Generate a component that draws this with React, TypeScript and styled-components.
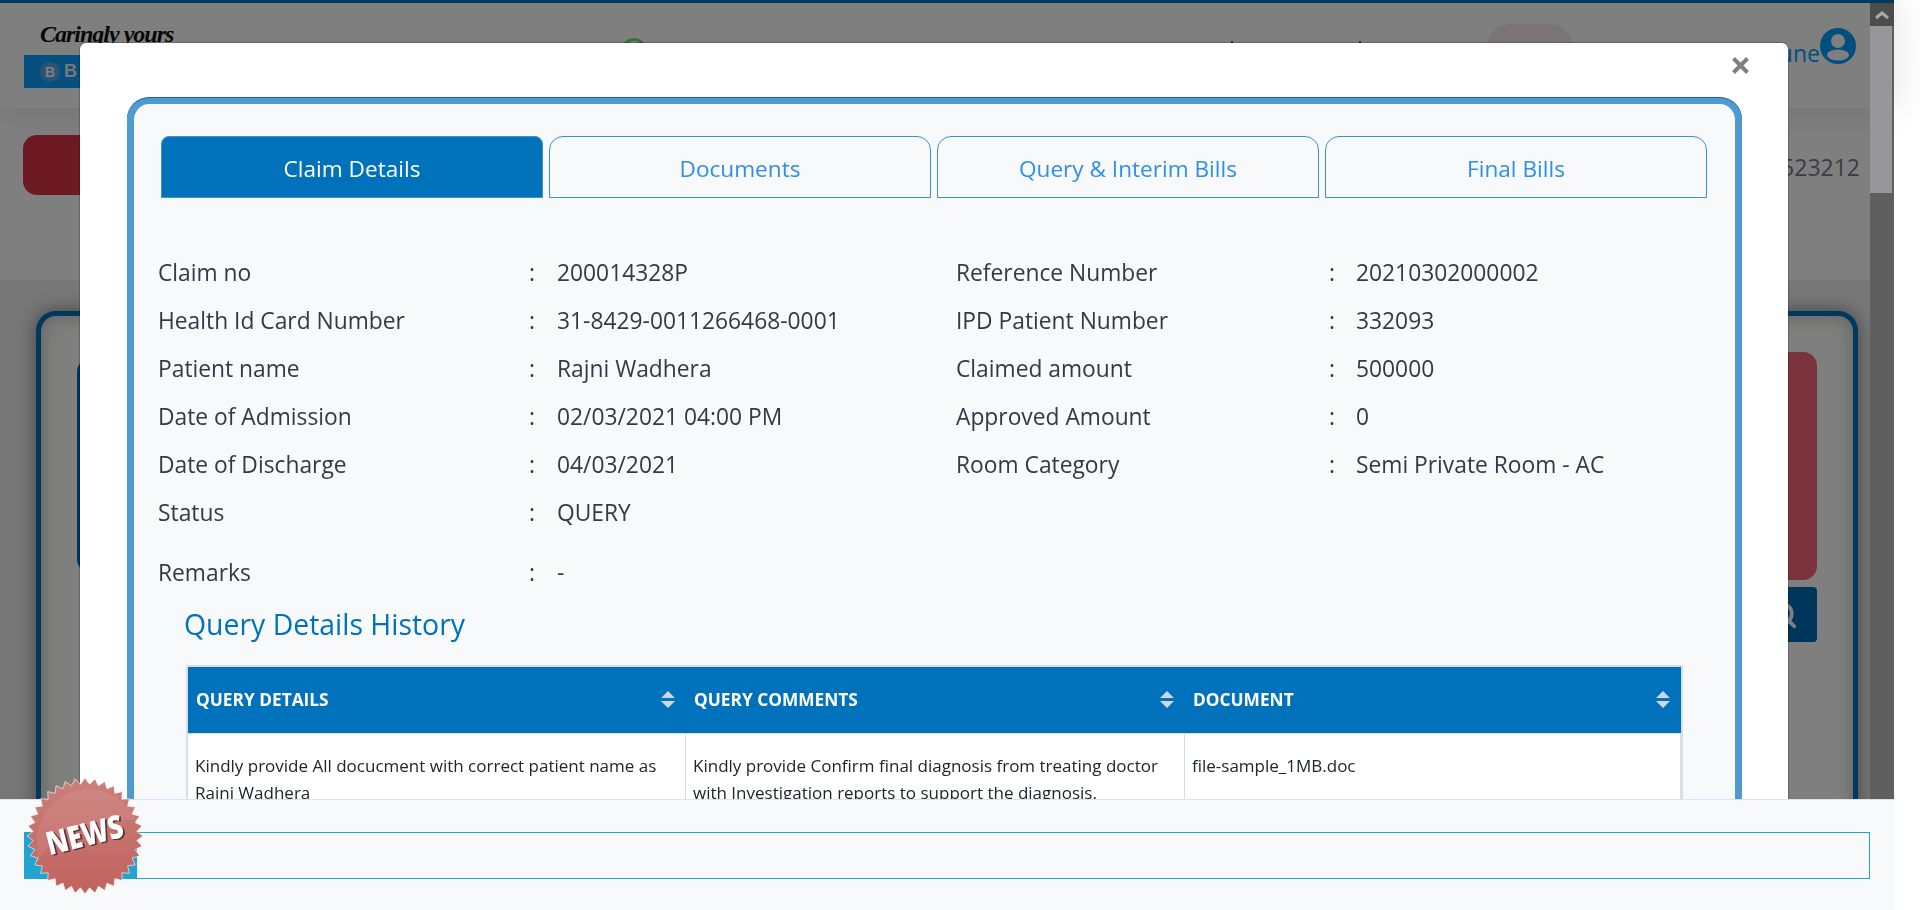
import React from "react";
import styled, { createGlobalStyle } from "styled-components";
import { Search } from "lucide-react";

const GlobalStyle = createGlobalStyle`
  html, body {
    margin: 0;
    padding: 0;
    height: 100%;
    overflow: hidden;
    background: #ffffff;
    font-family: "Open Sans", "Noto Sans", sans-serif;
  }
`;

/* page behind the modal, colours are before the 50% backdrop */
const Page = styled.div`
  width: 1894px;
  height: 910px;
  background: #eeeeee;
`;

const TopHeader = styled.header`
  position: relative;
  z-index: 1;
  box-sizing: border-box;
  height: 108px;
  display: flex;
  padding: 0 38px 0 24px;
  border-top: 3px solid #0072bc;
  background: #fdfefc;
  box-shadow: 0 0 40px rgba(0, 0, 0, 0.12);
`;

const Logo = styled.div`
  width: 180px;
  padding-top: 18px;
`;

const LogoScript = styled.div`
  height: 34px;
  padding-left: 16px;
  font: italic 700 24px "Liberation Serif", serif;
  letter-spacing: -1px;
  color: #111;
  white-space: nowrap;
`;

const LogoStrip = styled.div`
  display: flex;
  align-items: center;
  gap: 4px;
  height: 33px;
  padding-left: 16px;
  background: #0aa0ff;
`;

const LogoMark = styled.span`
  width: 20px;
  height: 20px;
  border-radius: 50%;
  background: #5aa8e8;
  color: #fff;
  font: 700 14px/20px "Liberation Sans", sans-serif;
  text-align: center;
`;

const LogoWord = styled.span`
  color: #eee;
  font: 700 18px "Liberation Sans", sans-serif;
`;

const StatusRing = styled.span`
  box-sizing: border-box;
  width: 26px;
  height: 26px;
  margin: 35px 0 0 417px;
  border: 3px solid #70e070;
  border-radius: 50%;
`;

const Tick = styled.span<{ $gap: number }>`
  width: 2px;
  height: 4px;
  margin: 38px 0 0 ${(p) => p.$gap}px;
  background: #0072bc;
`;

const Pill = styled.span`
  width: 86px;
  height: 48px;
  margin: 21px 0 0 126px;
  border-radius: 24px;
  background: #f4e6f0;
`;

const UserArea = styled.div`
  display: flex;
  align-items: flex-start;
  margin-left: auto;
  height: 36px;
  margin-top: 25px;
  color: #009eff;
  font-size: 23px;
`;

const UserName = styled.span`
  margin-top: 9px;
`;

const TitleBand = styled.div`
  box-sizing: border-box;
  height: 172px;
  display: flex;
  justify-content: space-between;
  padding: 27px 34px 0 23px;
  background: #ffffff;
`;

const BackButton = styled.div`
  width: 100px;
  height: 60px;
  border-radius: 14px;
  background: #dc3444;
`;

const PolicyNo = styled.div`
  margin-top: 16px;
  font-size: 23px;
  color: #74788f;
`;

const Content = styled.main`
  padding: 31px 36px 0;
`;

const SearchCard = styled.div`
  box-sizing: border-box;
  height: 620px;
  display: flex;
  justify-content: space-between;
  padding: 36px;
  background: #fdfefc;
  border: 5px solid #0072bc;
  border-radius: 20px;
  box-shadow: 0 0 18px rgba(0, 0, 0, 0.45), inset 0 0 18px rgba(0, 0, 0, 0.25);
`;

const FilterPanel = styled.div`
  width: 100px;
  height: 215px;
  margin-top: 6px;
  border-radius: 14px;
  background: #006bc0;
`;

const ActionColumn = styled.div`
  display: flex;
  flex-direction: column;
  align-items: flex-end;
  gap: 7px;
`;

const RedPanel = styled.div`
  width: 100px;
  height: 228px;
  border-radius: 14px;
  background: #f46678;
`;

const SearchButton = styled.div`
  width: 68px;
  height: 55px;
  display: flex;
  align-items: center;
  justify-content: center;
  border-radius: 4px;
  background: #006ab8;
  color: #fff;
`;

const Scrollbar = styled.div`
  position: fixed;
  z-index: 3;
  top: 3px;
  left: 1870px;
  width: 24px;
  height: 800px;
  background: #5f5f5f;
`;

const ScrollUp = styled.div`
  height: 23px;
  display: flex;
  align-items: center;
  justify-content: center;
  background: #4b4c4c;
`;

const ScrollThumb = styled.div`
  width: 22px;
  height: 167px;
  background: #97979a;
`;

const Backdrop = styled.div`
  position: fixed;
  z-index: 2;
  top: 0;
  left: 0;
  width: 1894px;
  height: 910px;
  background: rgba(0, 0, 0, 0.5);
`;

const Modal = styled.section`
  position: fixed;
  z-index: 4;
  top: 43px;
  left: 80px;
  width: 1708px;
  height: 900px;
  box-sizing: border-box;
  padding: 55px 46px 0 47px;
  background: #fff;
  border-radius: 6px;
  box-shadow: 0 0 0 1px rgba(0, 0, 0, 0.2);
`;

const Close = styled.svg`
  position: absolute;
  top: 14px;
  left: 1652px;
`;

const Card = styled.div`
  box-sizing: border-box;
  height: 800px;
  padding: 32px 28px 0 24px;
  background: #f7f9fb;
  border: 7px solid #4f9bd1;
  border-top-width: 6px;
  border-radius: 22px;
  box-shadow: 0 -1px 0 #0f68a8;
`;

const Tabs = styled.nav`
  display: flex;
  gap: 6px;
  margin-left: 3px;
`;

const Tab = styled.div<{ $active?: boolean }>`
  box-sizing: border-box;
  width: 382px;
  height: 62px;
  padding-top: 2px;
  display: flex;
  align-items: center;
  justify-content: center;
  font-size: 22.6px;
  color: ${(p) => (p.$active ? "#fff" : "#2f8fe8")};
  background: ${(p) => (p.$active ? "#0072bc" : "transparent")};
  border: 1px solid #3a8fd0;
  border-radius: ${(p) => (p.$active ? "8px 8px 0 0" : "14px 14px 0 0")};
`;

const Grid = styled.div`
  display: grid;
  grid-template-columns: 798px 1fr;
  margin-top: 50px;
`;

const Row = styled.div<{ $labelWidth: number; $colonWidth: number }>`
  display: grid;
  grid-template-columns: ${(p) => p.$labelWidth}px ${(p) => p.$colonWidth}px 1fr;
  height: 48px;
  align-items: center;
  font-size: 22.8px;
  color: #343a40;
  white-space: nowrap;
`;

const Remarks = styled(Row)`
  margin-top: 12px;
`;

const Heading = styled.h2`
  margin: 9px 0 0 26px;
  font-size: 28.4px;
  font-weight: 400;
  color: #0072bc;
`;

const Table = styled.div`
  box-sizing: border-box;
  margin: 22px 0 0 28px;
  width: 1497px;
  border: 2px solid #d9dde6;
  border-bottom: 0;
  background: #fff;
`;

const HeadRow = styled.div`
  display: grid;
  grid-template-columns: 498px 499px 1fr;
  height: 66px;
  align-items: center;
  background: #0072bc;
  color: #fff;
  font-size: 17.3px;
  font-weight: 700;
`;

const HeadCell = styled.div`
  display: flex;
  justify-content: space-between;
  align-items: center;
  padding: 0 11px 2px 8px;
`;

const BodyRow = styled.div`
  display: grid;
  grid-template-columns: 498px 499px 1fr;
  border-top: 1px solid #d9dde6;
  font-size: 17px;
  line-height: 27px;
  color: #212529;
`;

const BodyCell = styled.div`
  padding: 18px 8px 19px 7px;
  border-right: 1px solid #d9dde6;
`;

const BottomBar = styled.footer`
  position: fixed;
  z-index: 5;
  top: 799px;
  left: 0;
  width: 1894px;
  height: 111px;
  box-sizing: border-box;
  padding: 32px 24px 0;
  background: #f7f9fb;
  border-top: 1px solid #e0e0ee;
`;

const Ticker = styled.div`
  height: 47px;
  box-sizing: border-box;
  border: 1px solid #22a3d0;
  display: flex;
`;

const TickerBlock = styled.div`
  width: 112px;
  background: #22a3d0;
`;

const NewsBadge = styled.svg`
  position: fixed;
  z-index: 6;
  top: 776px;
  left: 25px;
`;

const SortArrows = () => (
  <svg width="14" height="17" viewBox="0 0 14 17" fill="#d0d6e2">
    <path d="M7 0l7 7H0zM0 10h14l-7 7z" />
  </svg>
);

const UserIcon = () => (
  <svg width="36" height="36" viewBox="0 0 36 36">
    <circle cx="18" cy="18" r="18" fill="#009eff" />
    <circle cx="18" cy="13" r="7" fill="#fdfefc" />
    <ellipse cx="18" cy="27" rx="11" ry="5.5" fill="#fdfefc" />
  </svg>
);

const burstPoints = Array.from({ length: 72 }, (_, i) => {
  const radius = i % 2 === 0 ? 58 : 52;
  const angle = (i * Math.PI) / 36;
  return `${60 + radius * Math.sin(angle)},${60 - radius * Math.cos(angle)}`;
}).join(" ");

const leftRows = [
  ["Claim no", "200014328P"],
  ["Health Id Card Number", "31-8429-0011266468-0001"],
  ["Patient name", "Rajni Wadhera"],
  ["Date of Admission", "02/03/2021 04:00 PM"],
  ["Date of Discharge", "04/03/2021"],
  ["Status", "QUERY"],
];

const rightRows = [
  ["Reference Number", "20210302000002"],
  ["IPD Patient Number", "332093"],
  ["Claimed amount", "500000"],
  ["Approved Amount", "0"],
  ["Room Category", "Semi Private Room - AC"],
];

const App = (): JSX.Element => (
  <>
    <GlobalStyle />
    <Page>
      <TopHeader>
        <Logo>
          <LogoScript>Caringly yours</LogoScript>
          <LogoStrip>
            <LogoMark>B</LogoMark>
            <LogoWord>B</LogoWord>
          </LogoStrip>
        </Logo>
        <StatusRing />
        <Tick $gap={584} />
        <Tick $gap={126} />
        <Pill />
        <UserArea>
          <UserName>une</UserName>
          <UserIcon />
        </UserArea>
      </TopHeader>
      <TitleBand>
        <BackButton />
        <PolicyNo>523212</PolicyNo>
      </TitleBand>
      <Content>
        <SearchCard>
          <FilterPanel />
          <ActionColumn>
            <RedPanel />
            <SearchButton>
              <Search size={30} strokeWidth={3} />
            </SearchButton>
          </ActionColumn>
        </SearchCard>
      </Content>
    </Page>
    <Backdrop />
    <Scrollbar>
      <ScrollUp>
        <svg width="14" height="10" viewBox="0 0 14 10" fill="none" stroke="#a8a8a8" strokeWidth="3">
          <path d="M1 8l6-5 6 5" />
        </svg>
      </ScrollUp>
      <ScrollThumb />
    </Scrollbar>
    <Modal>
      <Close width="17" height="17" viewBox="0 0 17 17" stroke="#7f7f7f" strokeWidth="4">
        <path d="M1.5 1.5l14 14M15.5 1.5l-14 14" />
      </Close>
      <Card>
        <Tabs>
          <Tab $active>Claim Details</Tab>
          <Tab>Documents</Tab>
          <Tab>Query &amp; Interim Bills</Tab>
          <Tab>Final Bills</Tab>
        </Tabs>
        <Grid>
          <div>
            {leftRows.map(([k, v]) => (
              <Row key={k} $labelWidth={371} $colonWidth={28}>
                <span>{k}</span>
                <span>:</span>
                <span>{v}</span>
              </Row>
            ))}
          </div>
          <div>
            {rightRows.map(([k, v]) => (
              <Row key={k} $labelWidth={373} $colonWidth={27}>
                <span>{k}</span>
                <span>:</span>
                <span>{v}</span>
              </Row>
            ))}
          </div>
        </Grid>
        <Remarks $labelWidth={371} $colonWidth={28}>
          <span>Remarks</span>
          <span>:</span>
          <span>-</span>
        </Remarks>
        <Heading>Query Details History</Heading>
        <Table>
          <HeadRow>
            <HeadCell>
              QUERY DETAILS
              <SortArrows />
            </HeadCell>
            <HeadCell>
              QUERY COMMENTS
              <SortArrows />
            </HeadCell>
            <HeadCell>
              DOCUMENT
              <SortArrows />
            </HeadCell>
          </HeadRow>
          <BodyRow>
            <BodyCell>Kindly provide All docucment with correct patient name as Rajni Wadhera</BodyCell>
            <BodyCell>
              Kindly provide Confirm final diagnosis from treating doctor with Investigation reports to support the diagnosis.
            </BodyCell>
            <BodyCell>file-sample_1MB.doc</BodyCell>
          </BodyRow>
        </Table>
      </Card>
    </Modal>
    <BottomBar>
      <Ticker>
        <TickerBlock />
      </Ticker>
    </BottomBar>
    <NewsBadge width="120" height="120" viewBox="0 0 120 120">
      <defs>
        <linearGradient id="burst" x1="0" y1="0" x2="0" y2="1">
          <stop offset="0" stopColor="#cc7f7a" />
          <stop offset="1" stopColor="#c1625e" />
        </linearGradient>
      </defs>
      <polygon points={burstPoints} fill="url(#burst)" stroke="#ffffff" strokeOpacity="0.6" strokeWidth="1" />
      <path d="M12 88C22 62 55 44 110 44L108 38A52 52 0 0 0 12 60z" fill="#ffffff" fillOpacity="0.07" />
      <g transform="rotate(-14 60 60)">
        <text
          x="61.5"
          y="71.5"
          textAnchor="middle"
          fontFamily="Open Sans, sans-serif"
          fontWeight="800"
          fontSize="32"
          textLength="78"
          lengthAdjust="spacingAndGlyphs"
          fill="#5a3030"
        >
          NEWS
        </text>
        <text
          x="60"
          y="70"
          textAnchor="middle"
          fontFamily="Open Sans, sans-serif"
          fontWeight="800"
          fontSize="32"
          textLength="78"
          lengthAdjust="spacingAndGlyphs"
          fill="#ffffff"
        >
          NEWS
        </text>
      </g>
    </NewsBadge>
  </>
);

export default App;
